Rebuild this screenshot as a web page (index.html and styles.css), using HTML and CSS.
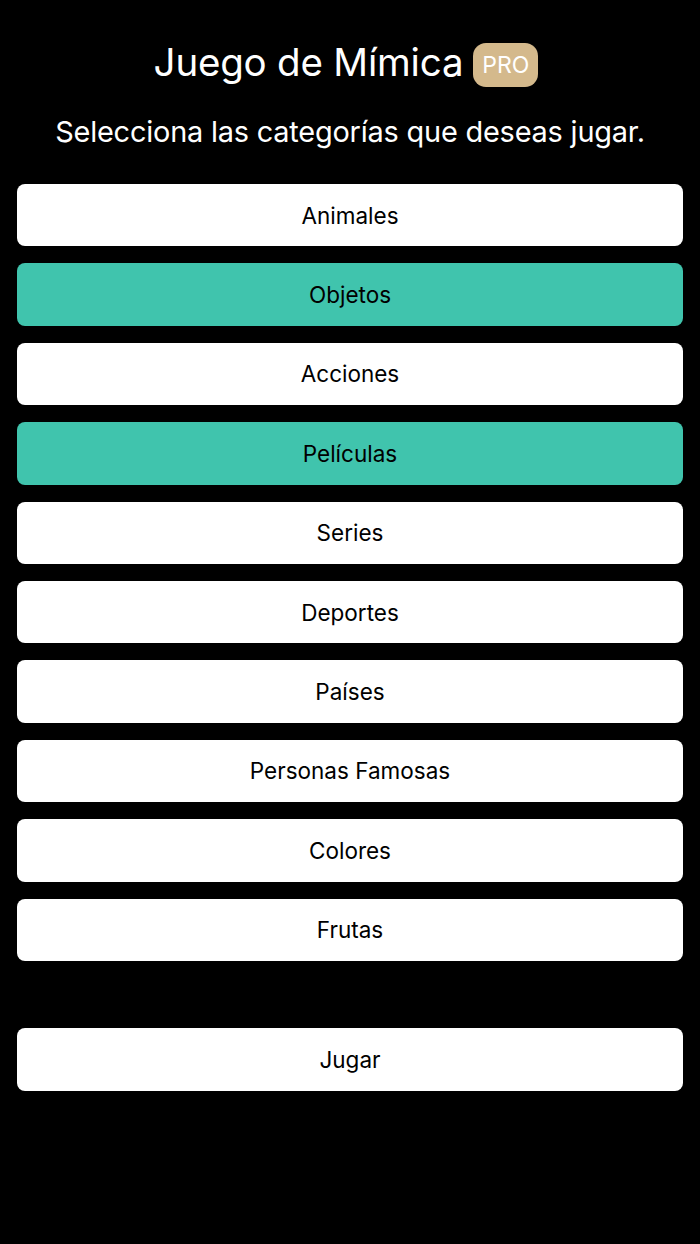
FILE: index.html
```html
<!DOCTYPE html>
<html lang="es">
<head>
<meta charset="utf-8">
<title>Juego de Mímica</title>
<link rel="stylesheet" href="styles.css">
</head>
<body>
<main class="screen">
  <header class="header">
    <h1 class="title">Juego de Mímica <span class="badge">PRO</span></h1>
    <p class="subtitle">Selecciona las categorías que deseas jugar.</p>
  </header>
  <div class="list">
    <button class="item">Animales</button>
    <button class="item selected">Objetos</button>
    <button class="item">Acciones</button>
    <button class="item selected">Películas</button>
    <button class="item">Series</button>
    <button class="item">Deportes</button>
    <button class="item">Países</button>
    <button class="item">Personas Famosas</button>
    <button class="item">Colores</button>
    <button class="item">Frutas</button>
  </div>
  <button class="item play">Jugar</button>
</main>
</body>
</html>
```

FILE: styles.css
```css
html, body {
  margin: 0;
  padding: 0;
  background: #000;
}
body {
  font-family: Inter, "Noto Sans", "Liberation Sans", sans-serif;
  color: #fff;
  width: 700px;
  height: 1244px;
}
.screen {
  display: flex;
  flex-direction: column;
  padding: 0 17px;
}
.header {
  display: flex;
  flex-direction: column;
  align-items: center;
  padding-top: 38px;
}
.title {
  margin: 0;
  padding-right: 8px;
  font-size: 38.5px;
  font-weight: 400;
  line-height: 48px;
  display: flex;
  align-items: center;
  gap: 10px;
  letter-spacing: -0.2px;
}
.badge {
  background: #d4b98c;
  color: #fff;
  font-size: 23px;
  line-height: 44px;
  height: 44px;
  padding: 0 9px;
  margin-top: 3px;
  margin-bottom: -3px;
  border-radius: 13px;
  letter-spacing: 0;
}
.subtitle {
  margin: 26px 0 0;
  font-size: 28.9px;
  line-height: 40px;
  letter-spacing: -0.2px;
}
.list {
  display: flex;
  flex-direction: column;
  gap: 17px;
  margin-top: 32px;
}
.item {
  display: flex;
  align-items: center;
  justify-content: center;
  height: 62.4px;
  border: none;
  border-radius: 8px;
  background: #fff;
  color: #000;
  font-family: Inter, "Noto Sans", "Liberation Sans", sans-serif;
  font-size: 22.5px;
  padding: 0;
  width: 100%;
}
.item.selected {
  background: #40c4ad;
}
.play {
  margin-top: 67.5px;
}
```
